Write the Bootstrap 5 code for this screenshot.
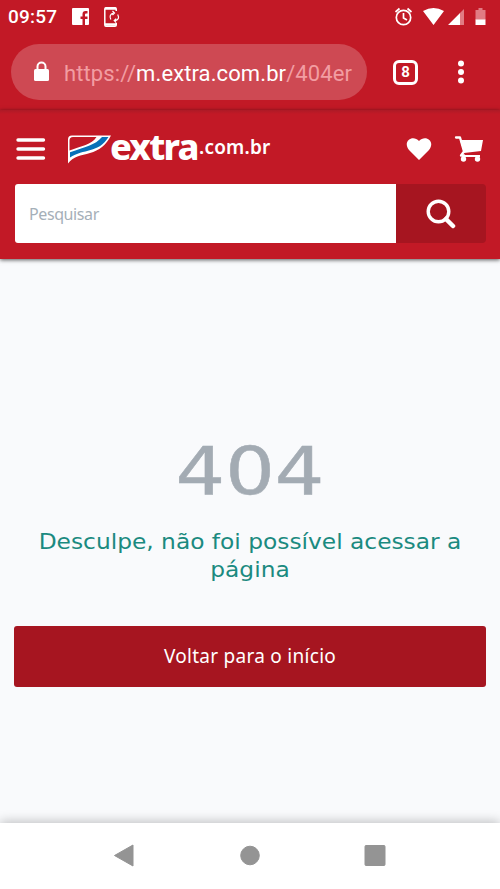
<!DOCTYPE html>
<html lang="pt-BR">
<head>
<meta charset="utf-8">
<meta name="viewport" content="width=device-width, initial-scale=1">
<title>Extra.com.br</title>
<link rel="stylesheet" href="https://cdn.jsdelivr.net/npm/bootstrap@5.3.0/dist/css/bootstrap.min.css">
<style>
body{height:889px;overflow:hidden;background:#f9fafc;font-family:"Noto Sans",sans-serif}
svg{display:block;flex:none}
.brand-bg{background:#c21926;color:#fff}
.status-bar{height:34px;font:500 19px/34px Roboto,sans-serif;padding-left:8px;padding-right:12px}
.clock{letter-spacing:.2px;width:49px}
.browser-bar{height:76px;padding:10px 30px 10px 11px;font-family:Roboto,sans-serif}
.url-pill{width:356px;height:56px;background:#ce4953;padding-left:22px;font-size:22px;color:#f29da2}
.url-text{margin:2px 0 0 14px;letter-spacing:.1px;white-space:nowrap}
.url-text b{font-weight:400;color:#fff}
.tab-count{width:25px;height:25px;border:3px solid #fff;border-radius:6px;font-size:15px;font-weight:700;margin-left:26px}
.site-header{height:149px;box-shadow:0 1px 4px rgba(0,0,0,.65);position:relative}
.top-edge{height:4px;background:linear-gradient(#ad1a26,#c21926)}
.brand-row{height:70px;padding:0 16px}
.logo{margin-left:21px;height:40px;white-space:nowrap}
.logo-name{font-size:36px;line-height:36px;font-weight:800;letter-spacing:-1.8px;margin-left:-1px;padding-bottom:5px;width:89px}
.logo-domain{font-size:19px;line-height:20px;font-weight:600;letter-spacing:.2px;padding-bottom:4px}
.search-row{width:auto;height:59px;margin:0 14px 0 15px}
.search-row .form-control{border:0;border-radius:3px 0 0 3px;padding:0 14px;font-size:16px;letter-spacing:-.4px;background:#fff}
.search-row .form-control::placeholder{color:#a5afb8;opacity:1}
.search-btn{width:90px;background:#a61520;border:0;border-radius:0 4px 4px 0}
.error-area{height:564px;padding:177px 14px 0}
.code{width:124px;font:400 65px/72px "DejaVu Sans",sans-serif;color:#a3abb3;transform:scaleX(1.2);-webkit-text-stroke:.5px #a3abb3}
.message{width:382px;font:400 21px/28px "DejaVu Sans",sans-serif;color:#1b8a80;margin-top:20px;transform:scaleX(1.11);white-space:nowrap}
.home-btn{height:61px;margin-top:42px;background:#a61520;color:#fff;border:0;border-radius:3px;font-size:19px;letter-spacing:.28px}
.home-btn:hover{background:#951019;color:#fff}
.system-nav{height:66px;background:#fff;box-shadow:0 -2px 10px rgba(0,0,0,.22);position:relative}
</style>
<script src="https://cdn.jsdelivr.net/npm/bootstrap@5.3.0/dist/js/bootstrap.bundle.min.js"></script>
</head>
<body class="d-flex flex-column">
<div class="brand-bg">
  <div class="status-bar d-flex align-items-center">
    <span class="clock">09:57</span>
    <svg style="margin-left:15px" width="17" height="18" viewBox="0 0 17 18"><path fill="#fff" fill-rule="evenodd" d="M1 0h15q1 0 1 1v15q0 1-1 1h-3v-6h2.500V8.500H13V6.500q0-1 1-1h1.500V3H13.500q-3 0-3 3v2.500H8.500V11h2v6H1q-1 0-1-1V1q0-1 1-1z"/></svg>
    <svg style="margin-left:15px" width="17" height="20" viewBox="0 0 17 20" fill="none" stroke="#fff"><path stroke-width="1.500" d="M12.250 4V2q0-1.200-1.200-1.200H2Q.8.800.8 2v16q0 1.200 1.200 1.200h9q1.250 0 1.250-1.200v-2"/><path stroke-width="2.300" d="M1 1.700h11M1 17.500h11"/><path stroke-width="1.200" d="M6.800 12.500Q4.500 7.500 9.500 6.200M8.500 4l2 2-2 2M13.700 7.500q2.500 5-2.500 6.300M12.200 11.600l-2 2 2 2"/></svg>
    <svg class="ms-auto" width="95" height="24" viewBox="393 5 95 24"><g fill="none" stroke="#fff" stroke-width="1.700"><circle cx="403.500" cy="17.500" r="7.200"/><path d="M403.500 13v5l3.500 2M395.500 12l4-3.500M411.500 12l-4-3.500"/></g><path fill="#fff" d="M423 11q10.500-6 21 0L433.500 25zM448 25l12-12v12z"/><path fill="#e17b83" d="M460 13l4-4v16h-4zM475.500 10h3V8h4v2h3v10h-10z"/><path fill="#fff" d="M475.500 19.500h10V25h-10z"/></svg>
  </div>
  <div class="browser-bar d-flex align-items-center">
    <div class="url-pill rounded-pill d-flex align-items-center">
      <svg width="17" height="22" viewBox="0 0 17 22"><rect x="1" y="8" width="15" height="12" rx="1.500" fill="#fff"/><path d="M4.500 9V5.500a4 4 0 0 1 8 0V9" fill="none" stroke="#fff" stroke-width="2"/></svg>
      <span class="url-text">https://<b>m.extra.com.br</b>/404er</span>
    </div>
    <div class="tab-count d-flex align-items-center justify-content-center">8</div>
    <svg class="ms-auto" width="16" height="26" viewBox="0 0 16 26" fill="#fff"><circle cx="7" cy="4.500" r="3"/><circle cx="7" cy="13" r="3"/><circle cx="7" cy="21.500" r="3"/></svg>
  </div>
</div>
<header class="site-header brand-bg">
  <div class="top-edge"></div>
  <div class="brand-row d-flex align-items-center">
    <svg width="30" height="24" viewBox="0 0 30 24" stroke="#fff" stroke-width="3.400" stroke-linecap="round"><path d="M2 3h25.500M2 12h25.500M2 21h25.500"/></svg>
    <div class="logo d-flex align-items-center">
      <svg width="44" height="30" viewBox="67 134 44 30">
        <path fill="#fff" d="M68 139.500q0-4 4-4h39c-5 10-12 15-21 17.500-9 2.500-17 3.500-22 10.500z"/>
        <path fill="#c21926" d="M69.500 140.500q0-3.500 3.500-3.500h23.500c-5 8-15 9-27 13.500z"/>
        <path fill="#0870b8" d="M70 157.500v-5.200c15-5.300 25-7 32-15.300h6.500c-10 16.500-25 11.500-38.500 20.500z"/>
      </svg>
      <span class="logo-name">extra</span><span class="logo-domain">.com.br</span>
    </div>
    <svg class="ms-auto" width="26" height="24" viewBox="0 0 26 24"><path fill="#fff" d="M13 23L3 13C-4 4 7-3 13 4c6-7 17 0 10 9z"/></svg>
    <svg style="margin-left:22px" width="30" height="28" viewBox="0 0 30 28"><path fill="#fff" d="M6 5h23l-2 11-17 2zM8 20h18v2H8z"/><path fill="none" stroke="#fff" stroke-width="2.300" stroke-linecap="round" stroke-linejoin="round" d="M2 2.500h4l4 14-3 4h3"/><circle cx="9.500" cy="24" r="2.700" fill="#fff"/><circle cx="23.500" cy="24" r="2.700" fill="#fff"/></svg>
  </div>
  <form class="search-row input-group flex-nowrap">
    <input class="form-control" type="search" placeholder="Pesquisar" aria-label="Pesquisar">
    <button class="btn search-btn d-flex align-items-center justify-content-center" type="button" aria-label="Buscar"><svg width="30" height="30" viewBox="0 0 30 30" fill="none" stroke="#fff"><circle cx="12.500" cy="12.500" r="10.300" stroke-width="3.400"/><path d="M20 20l7 7" stroke-width="4.500" stroke-linecap="round"/></svg></button>
  </form>
</header>
<main class="error-area text-center">
  <h1 class="code mx-auto mb-0">404</h1>
  <p class="message mx-auto mb-0">Desculpe, não foi possível acessar a<br>página</p>
  <a class="btn home-btn w-100 d-flex align-items-center justify-content-center" href="#">Voltar para o início</a>
</main>
<nav class="system-nav d-flex justify-content-center">
  <svg width="320" height="66" viewBox="90 823 320 66" fill="#949494" stroke="#949494" stroke-linejoin="round"><path d="M114.500 855.500L133 845v21z"/><circle cx="250" cy="855.500" r="9.300"/><rect x="365" y="845.500" width="20" height="20" rx="1"/></svg>
</nav>
</body>
</html>
